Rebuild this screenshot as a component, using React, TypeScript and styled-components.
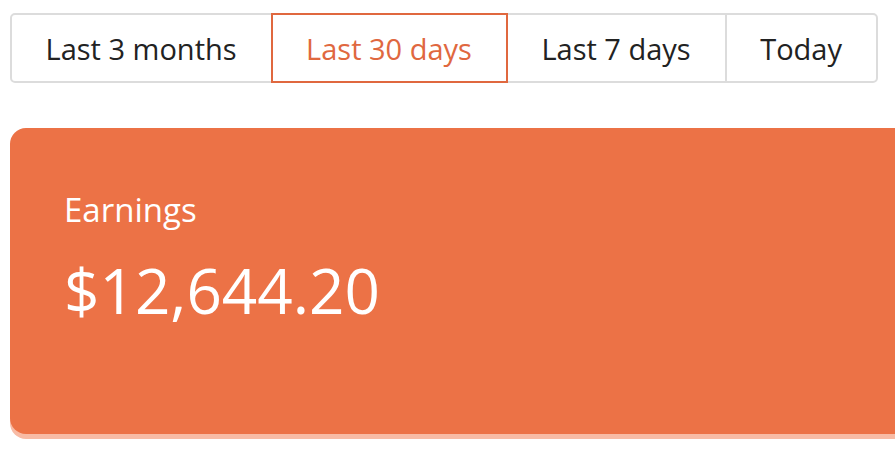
import React, { useState } from 'react'
import styled, { createGlobalStyle } from 'styled-components'

const GlobalStyle = createGlobalStyle`
  html, body {
    margin: 0;
    padding: 0;
    background: #ffffff;
    overflow: hidden;
  }
  body {
    font-family: 'Open Sans', 'Noto Sans', sans-serif;
  }
`

const ranges = ['Last 3 months', 'Last 30 days', 'Last 7 days', 'Today']

const App = () => {
  const [active, setActive] = useState('Last 30 days')

  return (
    <>
      <GlobalStyle />
      <Page>
        <TabGroup>
          {ranges.map((range) => (
            <Tab
              key={range}
              $active={range === active}
              onClick={() => setActive(range)}
            >
              {range}
            </Tab>
          ))}
        </TabGroup>
        <EarningsCard>
          <CardLabel>Earnings</CardLabel>
          <CardValue>$12,644.20</CardValue>
        </EarningsCard>
      </Page>
    </>
  )
}

export default App

const Page = styled.div`
  display: flex;
  flex-direction: column;
  align-items: flex-start;
  gap: 45px;
  padding: 13px 0 20px 10px;
`

const TabGroup = styled.div`
  display: flex;
  flex-direction: row;
  padding-left: 2px;
`

const Tab = styled.button<{ $active: boolean }>`
  position: relative;
  z-index: ${({ $active }) => ($active ? 1 : 0)};
  box-sizing: border-box;
  height: 70px;
  margin-left: -2px;
  padding: 0 34px 0 33.5px;
  display: flex;
  align-items: center;
  justify-content: center;

  font-family: inherit;
  font-size: 29px;
  font-weight: 400;
  color: ${({ $active }) => ($active ? '#e0683f' : '#222222')};
  background: #ffffff;
  border: 2px solid ${({ $active }) => ($active ? '#e0683f' : '#dcdcdc')};
  cursor: pointer;

  &:first-child {
    border-radius: 5px 0 0 5px;
  }

  &:last-child {
    border-radius: 0 5px 5px 0;
  }
`

const EarningsCard = styled.div`
  box-sizing: border-box;
  width: 1000px;
  height: 306px;
  display: flex;
  flex-direction: column;
  gap: 18px;
  padding: 60px 54px 0;
  border-radius: 16px;
  background-color: #ec7246;
  box-shadow: 0 5px 0 #f8bba5;
  color: #ffffff;
`

const CardLabel = styled.div`
  font-size: 33px;
  line-height: 44px;
`

const CardValue = styled.div`
  font-size: 62px;
  line-height: 80px;
`
